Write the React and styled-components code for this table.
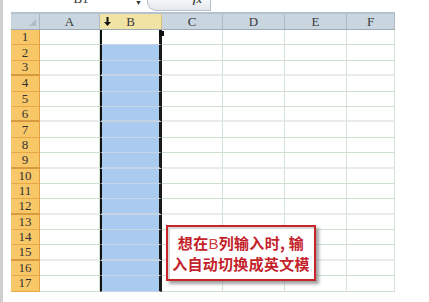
import styled, { createGlobalStyle } from "styled-components";

const GlobalStyle = createGlobalStyle`
  html, body {
    margin: 0;
    padding: 0;
    background: #ffffff;
  }
  body {
    font-family: "Liberation Sans", Arial, sans-serif;
  }
`;

const COLS = [
  { name: "A", width: 60 },
  { name: "B", width: 62, selected: true },
  { name: "C", width: 61 },
  { name: "D", width: 62 },
  { name: "E", width: 62 },
  { name: "F", width: 48 },
];
const ROWS = Array.from({ length: 17 }, (_, i) => i + 1);

const Page = styled.div`
  display: flex;
  width: 429px;
  height: 302px;
  overflow: hidden;
`;

const LeftEdge = styled.div`
  width: 3px;
  background: #cfcfcf;
  flex-shrink: 0;
`;

const Sheet = styled.div`
  position: relative;
  margin-left: 8px;
  width: 384px;
  display: flex;
  flex-direction: column;
`;

const FormulaBar = styled.div`
  height: 12px;
  display: flex;
  border-bottom: 2px solid #b4c2d0;
`;

const NameBox = styled.div`
  width: 124px;
  overflow: hidden;
  display: flex;
  justify-content: center;
  font-family: "Liberation Serif", serif;
  font-size: 13px;
  color: #333;
  span {
    margin-top: -9px;
    margin-left: 16px;
  }
`;

const DropArrow = styled.div`
  width: 12px;
  font-size: 7px;
  color: #333;
  line-height: 6px;
`;

const FxTab = styled.div`
  width: 64px;
  height: 11px;
  border: 1px solid #b8c2cc;
  border-top: none;
  border-radius: 0 0 0 9px;
  background: linear-gradient(#f4f6f8, #e4e8ec);
  overflow: hidden;
  display: flex;
  justify-content: flex-end;
  padding-right: 8px;
  box-sizing: border-box;
  font-family: "Liberation Serif", serif;
  font-style: italic;
  font-weight: bold;
  font-size: 11px;
  color: #444;
  span {
    margin-top: -7px;
  }
`;

const HeaderRow = styled.div`
  display: flex;
  height: 16px;
  border-bottom: 1px solid #9eabb6;
  box-sizing: border-box;
`;

const Corner = styled.div`
  position: relative;
  width: 29px;
  background: #c9d6df;
  border-right: 1px solid #a9b6c1;
  box-sizing: border-box;
  &::after {
    content: "";
    position: absolute;
    right: 3px;
    bottom: 3px;
    border-left: 7px solid transparent;
    border-bottom: 7px solid #b0bcc6;
  }
`;

const ColHeader = styled.div`
  width: ${(p) => p.$w}px;
  box-sizing: border-box;
  display: flex;
  align-items: center;
  justify-content: center;
  position: relative;
  background: ${(p) => (p.$sel ? "#f1e3a3" : "#c9d6df")};
  border-right: 1px solid ${(p) => (p.$sel ? "#d8c27a" : "#aebbc6")};
  font-family: "Liberation Serif", serif;
  font-size: 13px;
  color: #3a3a3a;
`;

const DownArrow = styled.svg`
  position: absolute;
  left: 4px;
  top: 3px;
`;

const Row = styled.div`
  display: flex;
  height: 15.4px;
`;

const RowHeader = styled.div`
  width: 29px;
  box-sizing: border-box;
  background: #f8c868;
  border-right: 1px solid #e2a040;
  border-bottom: ${(p) => (p.$thick ? "2px solid #d79a3e" : "1px solid #e6a84a")};
  display: flex;
  align-items: center;
  justify-content: center;
  font-family: "Liberation Serif", serif;
  font-size: 13px;
  color: #333;
`;

const Cell = styled.div`
  width: ${(p) => p.$w}px;
  box-sizing: border-box;
  background: #ffffff;
  border-right: 1px solid #d4e4d4;
  border-bottom: ${(p) => (p.$thick ? "2px solid #ebebeb" : "1px solid #cfe0cf")};
`;

const SelCell = styled.div`
  position: relative;
  width: 62px;
  box-sizing: border-box;
  background: ${(p) => (p.$active ? "#ffffff" : "#a9cbf0")};
  border-left: 2px solid #111;
  border-right: 3px solid #1a1a1a;
  border-bottom: ${(p) => (p.$thick ? "2px solid #c4d4e4" : "1px solid #c6d6e6")};
`;

const FillHandle = styled.div`
  position: absolute;
  right: -5px;
  top: 1px;
  width: 5px;
  height: 5px;
  background: #111;
`;

const Callout = styled.div`
  position: absolute;
  left: 155px;
  top: 225px;
  width: 150px;
  height: 56px;
  box-sizing: border-box;
  border: 2px solid #c4262c;
  background: #ffffff;
  box-shadow: 3px 3px 3px rgba(120, 120, 120, 0.7), inset 2px 2px 0 #d8d8d8;
  display: flex;
  flex-direction: column;
  align-items: center;
  justify-content: center;
  font-family: "Noto Sans CJK SC", sans-serif;
  font-weight: bold;
  font-size: 15px;
  line-height: 20px;
  color: #c4222a;
  letter-spacing: 0.3px;
`;

const Latin = styled.span`
  font-family: "Liberation Sans", Arial, sans-serif;
  font-weight: normal;
  color: #cc4040;
`;

export default function App() {
  return (
    <>
      <GlobalStyle />
      <Page>
        <LeftEdge />
        <Sheet>
          <FormulaBar>
            <NameBox>
              <span>B1</span>
            </NameBox>
            <DropArrow>▼</DropArrow>
            <FxTab>
              <span>fx</span>
            </FxTab>
          </FormulaBar>
          <HeaderRow>
            <Corner />
            {COLS.map((c) => (
              <ColHeader key={c.name} $w={c.width} $sel={c.selected}>
                {c.selected && (
                  <DownArrow width="7" height="9" viewBox="0 0 7 9">
                    <path d="M2.5 0h2v5h2.5L3.5 9 0 5h2.5z" fill="#111" />
                  </DownArrow>
                )}
                {c.name}
              </ColHeader>
            ))}
          </HeaderRow>
          {ROWS.map((r) => {
            const thick = r % 3 === 0;
            return (
              <Row key={r}>
                <RowHeader $thick={thick}>{r}</RowHeader>
                {COLS.map((c) =>
                  c.selected ? (
                    <SelCell key={c.name} $active={r === 1} $thick={thick}>
                      {r === 1 && <FillHandle />}
                    </SelCell>
                  ) : (
                    <Cell key={c.name} $w={c.width} $thick={thick} />
                  )
                )}
              </Row>
            );
          })}
          <Callout>
            <div>
              想在<Latin>B</Latin>列输入时, 输
            </div>
            <div>入自动切换成英文模</div>
          </Callout>
        </Sheet>
      </Page>
    </>
  );
}
